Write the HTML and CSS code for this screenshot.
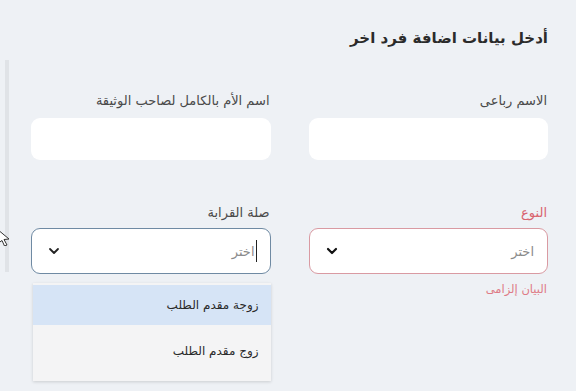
FILE: index.html
```html
<!DOCTYPE html>
<html lang="ar" dir="rtl">
<head>
    <meta charset="UTF-8">
    <meta name="viewport" content="width=device-width, initial-scale=1.0">
    <title>اضافة فرد</title>
    <link rel="stylesheet" href="styles.css">
</head>
<body>
    <div class="side-line"></div>
    <svg class="mouse" width="12" height="18" viewBox="0 0 12 18">
        <path d="M-3 1 L9 11 L4 11.5 L7 17 L4.5 18 L2 12.5 L-3 16 Z" fill="#fff" stroke="#333" stroke-width="1"/>
    </svg>
    <div class="form">
        <h1 class="title">أدخل بيانات اضافة فرد اخر</h1>
        <div class="row">
            <div class="field">
                <label>الاسم رباعى</label>
                <div class="input"></div>
            </div>
            <div class="field">
                <label>اسم الأم بالكامل لصاحب الوثيقة</label>
                <div class="input"></div>
            </div>
        </div>
        <div class="row row-select">
            <div class="field">
                <label class="error-label">النوع</label>
                <div class="select select-error">
                    <span class="placeholder">اختر</span>
                    <svg class="chev" width="12" height="8" viewBox="0 0 12 8"><path d="M2 2 L6 6 L10 2" fill="none" stroke="#111" stroke-width="2.2" stroke-linecap="round" stroke-linejoin="round"/></svg>
                </div>
                <div class="error-text">البيان إلزامى</div>
            </div>
            <div class="field">
                <label>صلة القرابة</label>
                <div class="select select-focus">
                    <span class="placeholder"><span class="caret"></span>اختر</span>
                    <svg class="chev" width="12" height="8" viewBox="0 0 12 8"><path d="M2 2 L6 6 L10 2" fill="none" stroke="#222" stroke-width="1.8" stroke-linecap="round" stroke-linejoin="round"/></svg>
                </div>
                <ul class="options">
                    <li class="active">زوجة مقدم الطلب</li>
                    <li>زوج مقدم الطلب</li>
                </ul>
            </div>
        </div>
    </div>
</body>
</html>
```

FILE: styles.css
```css
body {
    margin: 0;
    background-color: #eef1f5;
    font-family: "DejaVu Sans", "Noto Sans", sans-serif;
    color: #333;
    height: 391px;
    overflow: hidden;
    position: relative;
}
.side-line {
    position: absolute;
    left: 5px;
    top: 60px;
    width: 4px;
    height: 212px;
    background-color: #e0e3e7;
}
.mouse {
    position: absolute;
    left: 0;
    top: 228px;
}
.form {
    padding: 26px 28px 0 0;
    width: 517px;
}
.title {
    margin: 0;
    font-size: 15px;
    font-weight: bold;
    color: #2b2b2b;
    line-height: 24px;
}
.row {
    display: flex;
    gap: 38px;
    margin-top: 42px;
}
.row-select {
    margin-top: 44px;
}
.field {
    width: 240px;
    position: relative;
}
.field label {
    display: block;
    font-size: 13px;
    color: #4a4a4a;
    line-height: 18px;
    margin-bottom: 8px;
    padding-right: 1px;
}
.input {
    height: 42px;
    background-color: #fff;
    border-radius: 9px;
}
.select {
    height: 44px;
    background-color: #fff;
    border-radius: 9px;
    border: 1px solid #6f8aa3;
    display: flex;
    align-items: center;
    justify-content: space-between;
    padding: 0 13px 0 16px;
    margin-top: -2px;
}
.select-error {
    border-color: #d99aa2;
}
.placeholder {
    font-size: 13px;
    color: #8a8a8a;
    display: flex;
    align-items: center;
}
.caret {
    display: inline-block;
    width: 1px;
    height: 22px;
    background-color: #222;
    margin-left: 1px;
}
.chev {
    display: block;
}
.error-label {
    color: #d9636f !important;
}
.error-text {
    font-size: 11.5px;
    color: #de7b86;
    margin-top: 8px;
    padding-right: 1px;
}
.options {
    position: absolute;
    right: 0;
    top: 79px;
    width: 238px;
    margin: 0;
    padding: 2px 0 0;
    list-style: none;
    background-color: #f4f4f5;
    box-shadow: 0 1px 3px rgba(0, 0, 0, 0.15);
    height: 96px;
}
.options li {
    font-size: 12px;
    color: #2a2a2a;
    padding: 0 12px;
    line-height: 40px;
    height: 40px;
}
.options li + li {
    height: 54px;
    line-height: 52px;
}
.options li.active {
    background-color: #d6e4f6;
}
```
